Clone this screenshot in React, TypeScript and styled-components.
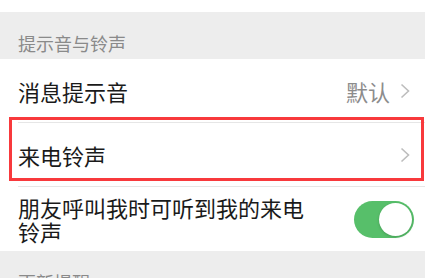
import React from 'react';
import styled, { createGlobalStyle } from 'styled-components';

const GlobalStyle = createGlobalStyle`
  html, body {
    margin: 0;
    padding: 0;
    background: #ffffff;
  }
  body {
    font-family: "Noto Sans CJK SC", "Noto Sans", sans-serif;
  }
`;

const Page = styled.div`
  display: flex;
  flex-direction: column;
  padding-top: 12px;
  background: #ffffff;
`;

const SectionHeader = styled.div`
  height: 47px;
  box-sizing: border-box;
  padding: 19px 18px 0;
  background: #ededed;
  color: #8a8a8a;
  font-size: 18px;
  line-height: 24px;
`;

const Group = styled.div`
  display: flex;
  flex-direction: column;
  background: #ffffff;
`;

const Row = styled.div<{ $divider?: boolean }>`
  position: relative;
  display: flex;
  align-items: center;
  justify-content: space-between;
  height: 64px;
  box-sizing: border-box;
  padding: 0 15px 0 18px;
  &::after {
    content: '';
    display: ${p => (p.$divider ? 'block' : 'none')};
    position: absolute;
    left: 18px;
    right: 0;
    bottom: 0;
    height: 1px;
    background: #e6e6e6;
  }
`;

const Label = styled.div`
  color: #1a1a1a;
  font-size: 22px;
  line-height: 24px;
  max-width: 300px;
`;

const Trail = styled.div`
  display: flex;
  align-items: center;
  gap: 10px;
`;

const Value = styled.span`
  color: #8c8c8c;
  font-size: 22px;
`;

const Chevron = () => (
  <svg width="10" height="16" viewBox="0 0 10 16">
    <path d="M1.5 1.5 L8.5 8 L1.5 14.5" fill="none" stroke="#bdbdbd" strokeWidth="1.6" />
  </svg>
);

const Highlight = styled.div`
  position: absolute;
  top: -6px;
  left: 9px;
  right: 1px;
  height: 64px;
  box-sizing: border-box;
  border: 3px solid #f8393c;
  pointer-events: none;
`;

const Track = styled.div<{ $on: boolean }>`
  display: flex;
  justify-content: ${p => (p.$on ? 'flex-end' : 'flex-start')};
  align-items: center;
  width: 60px;
  height: 37px;
  box-sizing: border-box;
  padding: 2px;
  border-radius: 19px;
  background: ${p => (p.$on ? '#57bf6a' : '#e5e5e5')};
  margin-right: -4px;
`;

const Knob = styled.div`
  width: 33px;
  height: 33px;
  border-radius: 50%;
  background: #ffffff;
  box-shadow: 0 1px 3px rgba(0, 0, 0, 0.18);
`;

export default function App() {
  return (
    <>
      <GlobalStyle />
      <Page>
        <SectionHeader>提示音与铃声</SectionHeader>
        <Group>
          <Row $divider>
            <Label>消息提示音</Label>
            <Trail>
              <Value>默认</Value>
              <Chevron />
            </Trail>
          </Row>
          <Row $divider>
            <Label>来电铃声</Label>
            <Trail>
              <Chevron />
            </Trail>
            <Highlight />
          </Row>
          <Row>
            <Label>朋友呼叫我时可听到我的来电铃声</Label>
            <Track $on>
              <Knob />
            </Track>
          </Row>
        </Group>
        <SectionHeader>更新提醒</SectionHeader>
      </Page>
    </>
  );
}
